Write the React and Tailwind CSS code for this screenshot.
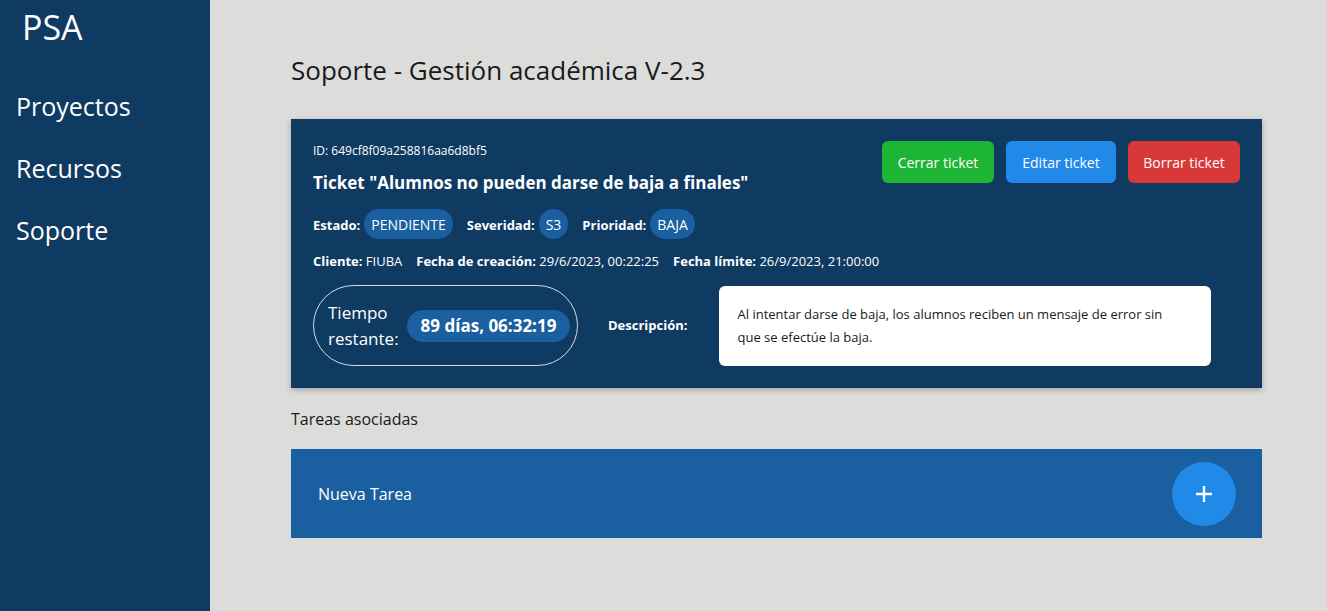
import React from "react";

const Badge = ({ children }) => (
  <span className="ml-1 inline-flex h-[30px] items-center rounded-full bg-[#1a5fa0] px-[7px] text-[14px] font-normal text-white">
    {children}
  </span>
);

const TicketCard = () => {
  return (
    <div className="bg-[#0f3a62] px-[22px] pt-[24px] pb-[22px] text-white shadow-[0_2px_6px_rgba(0,0,0,0.25)]">
      <div className="flex items-start justify-between">
        <div>
          <p className="text-[12px] leading-[16px]">ID: 649cf8f09a258816aa6d8bf5</p>
          <h2 className="mt-[12px] text-[17px] font-bold leading-[24px]">
            Ticket "Alumnos no pueden darse de baja a finales"
          </h2>
        </div>
        <div className="-mt-[2px] flex gap-3">
          <button className="h-[42px] w-[112px] rounded-md bg-[#1db534] text-[14px]">Cerrar ticket</button>
          <button className="h-[42px] w-[110px] rounded-md bg-[#218ae8] text-[14px]">Editar ticket</button>
          <button className="h-[42px] w-[112px] rounded-md bg-[#d83838] text-[14px]">Borrar ticket</button>
        </div>
      </div>

      <div className="mt-[14px] flex items-center gap-[14px] text-[13px] font-bold">
        <span>Estado:<Badge>PENDIENTE</Badge></span>
        <span>Severidad:<Badge>S3</Badge></span>
        <span>Prioridad:<Badge>BAJA</Badge></span>
      </div>

      <div className="mt-[13px] flex gap-[14px] text-[13px] leading-[18px]">
        <span><b>Cliente:</b> FIUBA</span>
        <span><b>Fecha de creación:</b> 29/6/2023, 00:22:25</span>
        <span><b>Fecha límite:</b> 26/9/2023, 21:00:00</span>
      </div>

      <div className="mt-[15px] flex items-center">
        <div className="flex h-[81px] w-[265px] items-center gap-[8px] rounded-full border border-[#d7dde5] pl-[14px]">
          <span className="text-[17px] leading-[26px]">Tiempo<br />restante:</span>
          <span className="flex h-[32px] items-center rounded-full bg-[#1a5fa0] px-[14px] text-[17px] font-bold">
            89 días, 06:32:19
          </span>
        </div>
        <span className="ml-[30px] text-[13px] font-bold">Descripción:</span>
        <div className="ml-[31px] h-[80px] w-[492px] rounded-md bg-white pl-[19px] pr-[28px] pt-[17px] text-[13px] leading-[23px] text-[#1a1a1a]">
          Al intentar darse de baja, los alumnos reciben un mensaje de error sin que se efectúe la baja.
        </div>
      </div>
    </div>
  );
};

export default function App() {
  return (
    <div className="flex h-[611px] w-full bg-[#dcdcda] font-['Open_Sans',sans-serif]">
      <aside className="w-[210px] shrink-0 bg-[#0f3a62] text-white">
        <div className="pl-[22px] pt-[5px] text-[34px] leading-[44px]">PSA</div>
        <nav className="mt-[38px] flex flex-col gap-[24px] pl-[16px] text-[25px] leading-[38px]">
          <a>Proyectos</a>
          <a>Recursos</a>
          <a>Soporte</a>
        </nav>
      </aside>

      <main className="w-[971px] pl-[81px] pt-[52px] box-content">
        <h1 className="text-[26px] leading-[36px] text-[#1a1a1a]">Soporte - Gestión académica V-2.3</h1>
        <div className="mt-[31px]">
          <TicketCard />
        </div>
        <p className="mt-[20px] text-[16px] leading-[22px] text-[#1a1a1a]">Tareas asociadas</p>
        <div className="mt-[19px] flex h-[89px] items-center justify-between bg-[#1a5fa0] pl-[27px] pr-[26px] text-white">
          <span className="text-[16px]">Nueva Tarea</span>
          <button className="flex h-[64px] w-[64px] items-center justify-center rounded-full bg-[#2189e8]">
            <svg width="20" height="20" viewBox="0 0 20 20">
              <path d="M10 2v16M2 10h16" stroke="white" strokeWidth="2.4" />
            </svg>
          </button>
        </div>
      </main>
    </div>
  );
}
